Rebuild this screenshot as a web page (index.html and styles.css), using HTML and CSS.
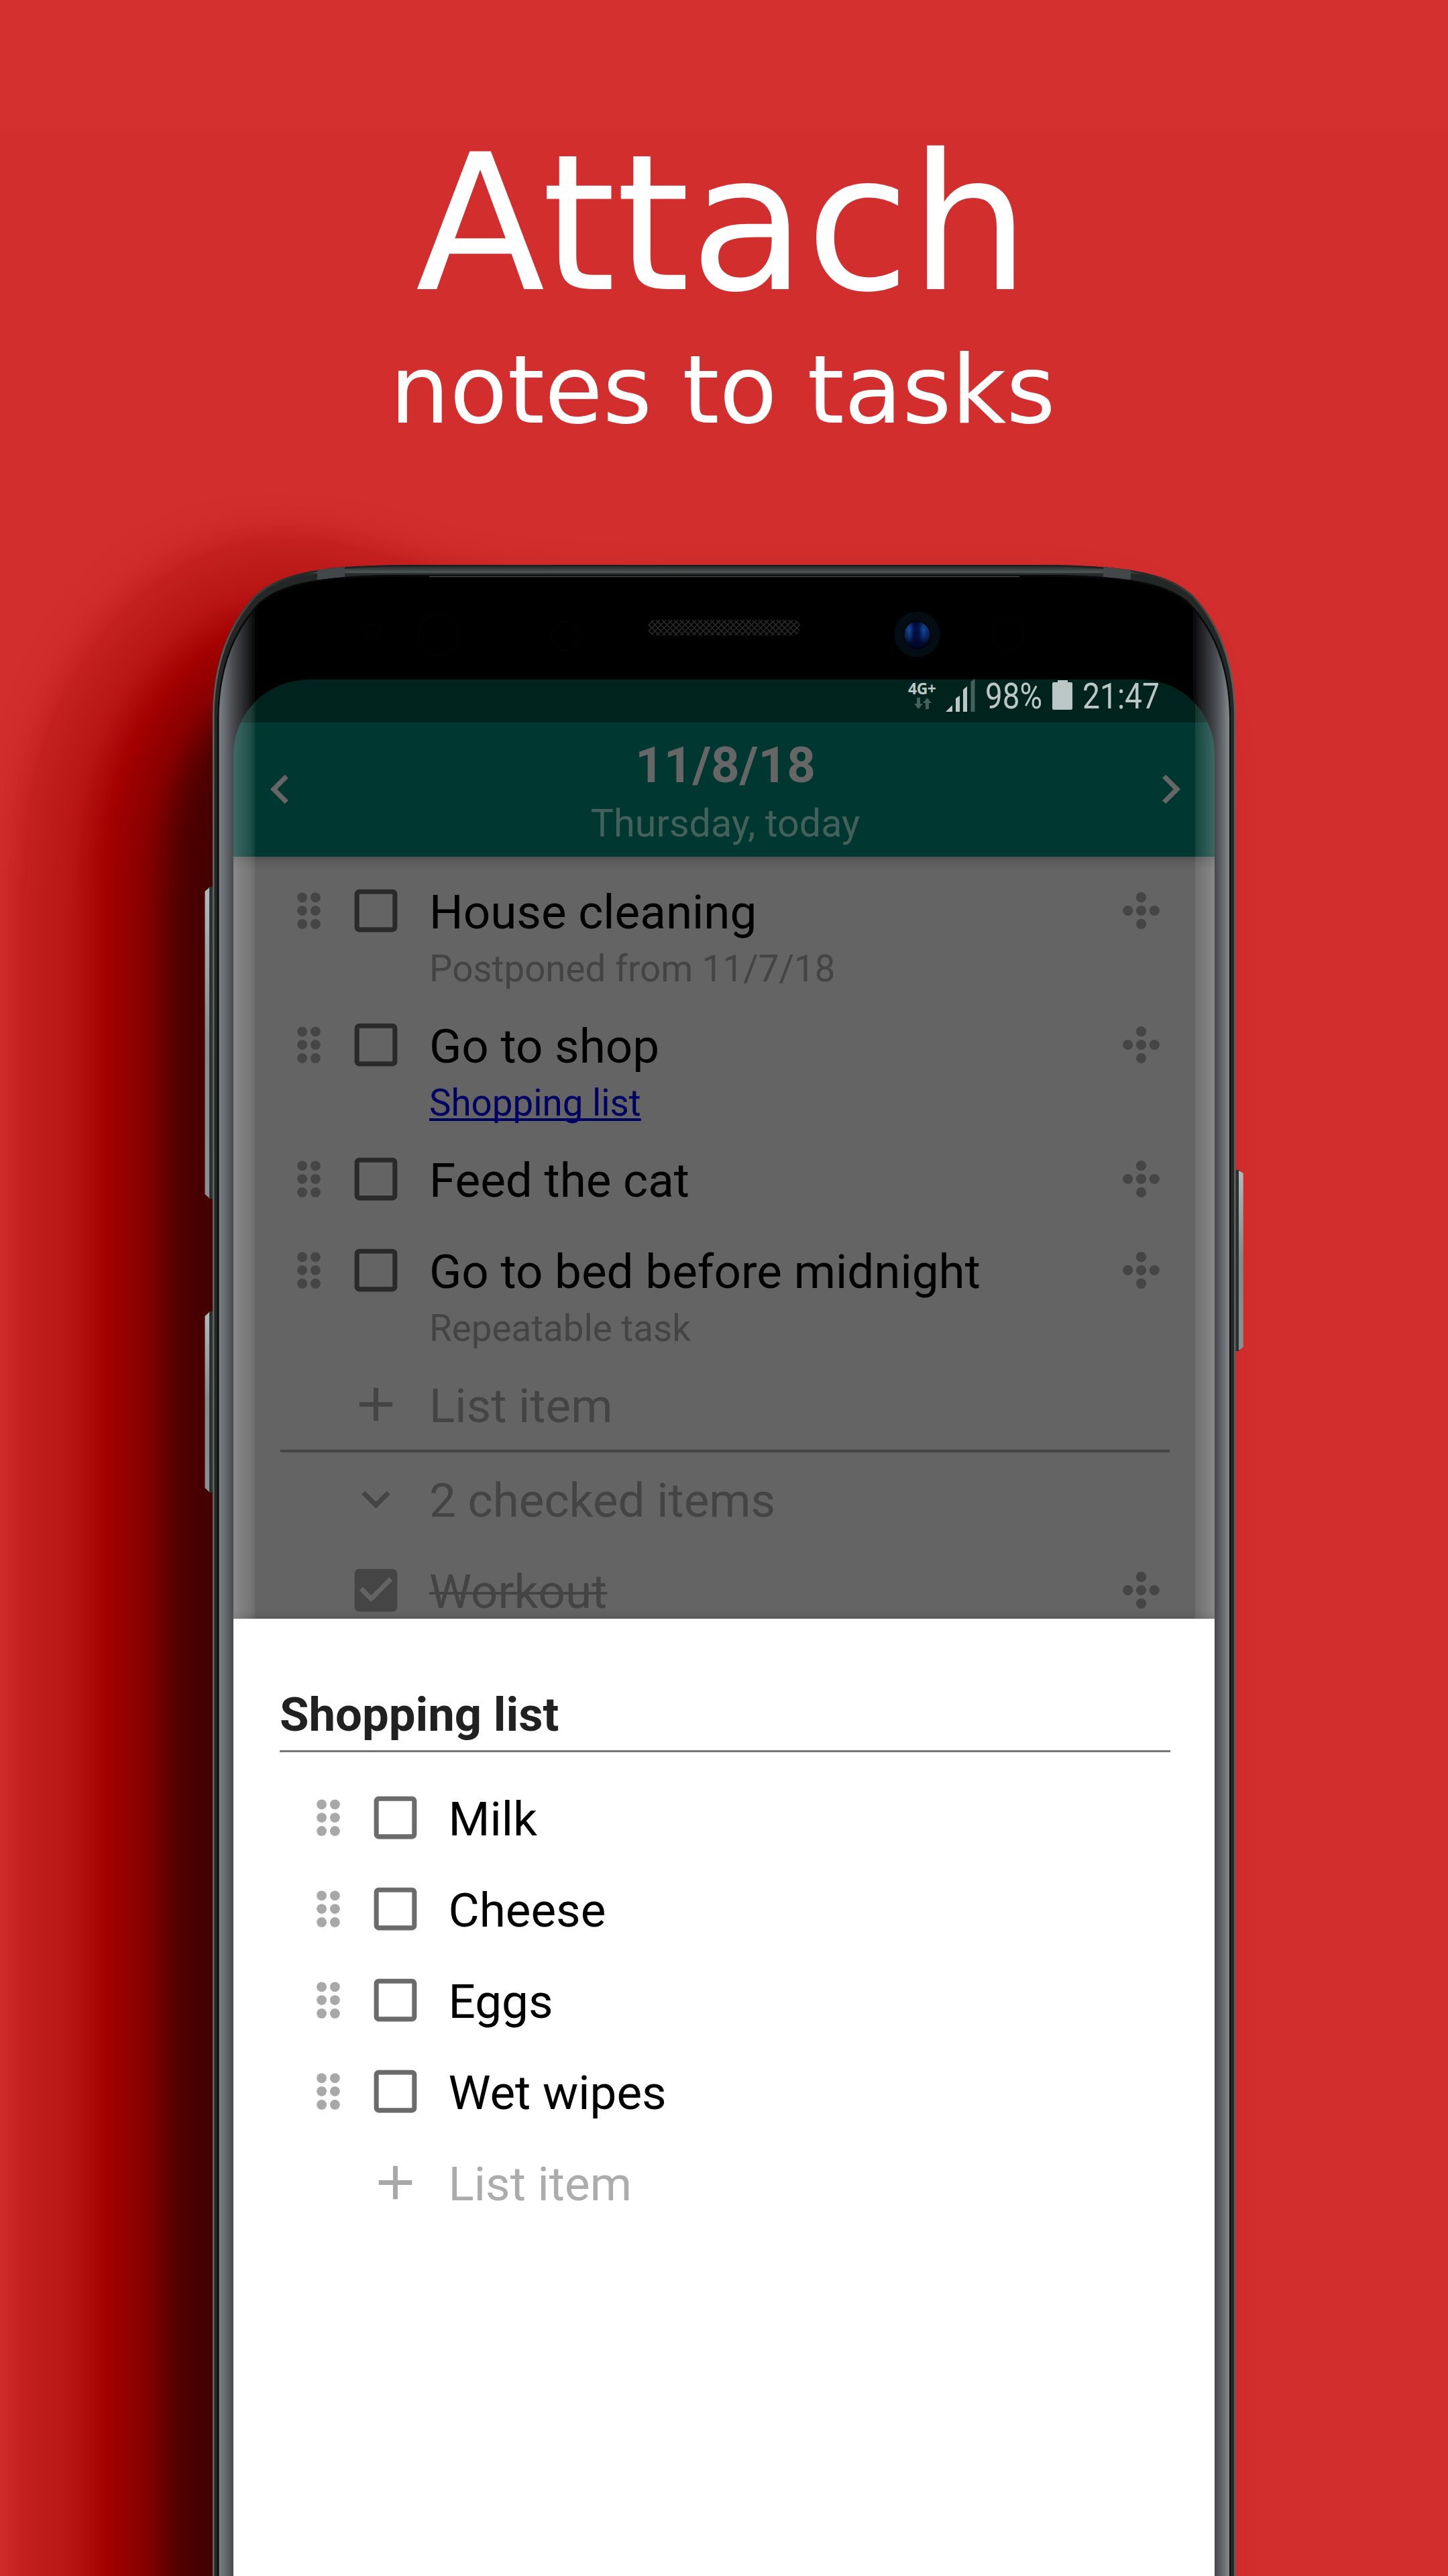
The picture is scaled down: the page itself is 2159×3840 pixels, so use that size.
FILE: index.html
```html
<!DOCTYPE html>
<html lang="en">
<head>
<meta charset="utf-8">
<title>Attach notes to tasks</title>
<link rel="stylesheet" href="styles.css">
</head>
<body>
<svg class="defs" aria-hidden="true">
  <symbol id="i-handle" viewBox="0 0 85 85"><circle cx="32.6" cy="22.8" r="7.4"/><circle cx="52.4" cy="22.8" r="7.4"/><circle cx="32.6" cy="42.6" r="7.4"/><circle cx="52.4" cy="42.6" r="7.4"/><circle cx="32.6" cy="62.4" r="7.4"/><circle cx="52.4" cy="62.4" r="7.4"/></symbol>
  <symbol id="i-move" viewBox="0 0 85 85"><circle cx="42.5" cy="22.7" r="7.6"/><circle cx="22.7" cy="42.5" r="7.6"/><circle cx="42.5" cy="42.5" r="7.6"/><circle cx="62.3" cy="42.5" r="7.6"/><circle cx="42.5" cy="62.3" r="7.6"/></symbol>
  <symbol id="i-box" viewBox="0 0 24 24"><path d="M19 5v14H5V5h14m0-2H5c-1.100 0-2 .9-2 2v14c0 1.100.9 2 2 2h14c1.100 0 2-.9 2-2V5c0-1.100-.9-2-2-2z"/></symbol>
  <symbol id="i-checked" viewBox="0 0 24 24"><path d="M19 3H5c-1.110 0-2 .9-2 2v14c0 1.100.89 2 2 2h14c1.110 0 2-.9 2-2V5c0-1.100-.89-2-2-2zm-9 14l-5-5 1.410-1.410L10 14.170l7.590-7.590L19 8l-9 9z"/></symbol>
  <symbol id="i-plus" viewBox="0 0 24 24"><path d="M19 13h-6v6h-2v-6H5v-2h6V5h2v6h6v2z"/></symbol>
  <symbol id="i-down" viewBox="0 0 24 24"><path d="M16.590 8.590L12 13.170 7.410 8.590 6 10l6 6 6-6z"/></symbol>
  <symbol id="i-left" viewBox="0 0 24 24"><path d="M15.410 7.410L14 6l-6 6 6 6 1.410-1.410L10.830 12z"/></symbol>
  <symbol id="i-right" viewBox="0 0 24 24"><path d="M10 6L8.590 7.410 13.170 12l-4.580 4.590L10 18l6-6z"/></symbol>
</svg>

<div class="poster">
  <svg class="device" viewBox="0 0 2159 3840" aria-hidden="true">
    <defs>
      <filter id="glow" filterUnits="userSpaceOnUse" x="-500" y="200" width="3200" height="4200" color-interpolation-filters="sRGB">
        <feGaussianBlur stdDeviation="80"/>
        <feComponentTransfer>
          <feFuncR type="table" tableValues=".827 .769 .749 .737 .729 .718 .698 .682 .667 .651 .639 .616 .596 .58 .557 .537 .49 .424 .353 .29 .259"/>
          <feFuncG type="table" tableValues=".184 .125 .114 .102 .09 .078 .063 .047 .031 .016 0 0 0 0 0 0 0 0 0 0 0"/>
          <feFuncB type="table" tableValues=".184 .125 .112 .1 .088 .076 .06 .045 .03 .014 0 0 0 0 0 0 0 0 0 0 0"/>
        </feComponentTransfer>
      </filter>
      <filter id="soft" x="-20%" y="-5%" width="140%" height="110%"><feGaussianBlur stdDeviation="4"/></filter>
      <linearGradient id="rim" gradientUnits="userSpaceOnUse" x1="0" y1="842" x2="0" y2="857">
        <stop offset="0" stop-color="#1b1f20"/><stop offset=".75" stop-color="#4f5755"/><stop offset=".85" stop-color="#2c3130"/><stop offset="1" stop-color="#232827"/>
      </linearGradient>
      <linearGradient id="rimEdge" gradientUnits="userSpaceOnUse" x1="0" y1="842" x2="0" y2="1100">
        <stop offset="0" stop-color="#1b1f20"/><stop offset=".12" stop-color="#343a3a"/><stop offset=".5" stop-color="#555d5b"/><stop offset="1" stop-color="#5e6664"/>
      </linearGradient>
      <linearGradient id="edgeL" gradientUnits="userSpaceOnUse" x1="324" y1="0" x2="382" y2="0">
        <stop offset="0" stop-color="#83878d"/><stop offset=".2" stop-color="#666a70"/><stop offset=".41" stop-color="#46494e"/><stop offset=".75" stop-color="#222426"/><stop offset="1" stop-color="#000"/>
      </linearGradient>
      <linearGradient id="edgeR" gradientUnits="userSpaceOnUse" x1="1835.500" y1="0" x2="1777.500" y2="0">
        <stop offset="0" stop-color="#8e9498"/><stop offset=".2" stop-color="#666a6f"/><stop offset=".41" stop-color="#43474a"/><stop offset=".75" stop-color="#222426"/><stop offset="1" stop-color="#000"/>
      </linearGradient>
      <linearGradient id="key" x1="0" y1="0" x2="0" y2="1"><stop offset="0" stop-color="#b4babb"/><stop offset=".5" stop-color="#838b8b"/><stop offset="1" stop-color="#899192"/></linearGradient>
      <linearGradient id="lens" x1="0" y1="0" x2="1" y2="0"><stop offset="0" stop-color="#06245c"/><stop offset=".2" stop-color="#14509b"/><stop offset=".38" stop-color="#031048"/><stop offset=".55" stop-color="#031048"/><stop offset=".75" stop-color="#0f4c96"/><stop offset="1" stop-color="#06245c"/></linearGradient>
      <linearGradient id="lensShade" x1="0" y1="0" x2="0" y2="1"><stop offset="0" stop-color="#01082a" stop-opacity=".5"/><stop offset=".3" stop-color="#01082a" stop-opacity="0"/><stop offset=".6" stop-color="#01082a" stop-opacity=".4"/><stop offset=".85" stop-color="#01082a"/></linearGradient>
      <pattern id="mesh" width="9" height="9" patternUnits="userSpaceOnUse"><path d="M0 0L9 9M9 0L0 9" stroke="#2b2b2b" stroke-width="1.500"/></pattern>
      <clipPath id="body"><path id="outline" d="M317 3860V1066C318 980 345 925 381 887C420 853 480 842 620 842H1539.500C1679.500 842 1739.500 853 1778.500 887C1814.500 925 1841.500 980 1842.500 1066V3860Z"/></clipPath>
      <clipPath id="glass"><path d="M324 3860V1070C325 990 350 935 388 897C425 866 490 857 620 857H1539.500C1669.500 857 1734.500 866 1771.500 897C1809.500 935 1834.500 990 1835.500 1070V3860Z"/></clipPath>
    </defs>
    <g filter="url(#glow)">
      <rect x="-900" y="-200" width="4200" height="5200" fill="#000"/>
      <path fill="#fff" d="M160 4800V1280C160 1120 240 1000 350 932C430 895 520 950 660 985L900 1002H1600C1660 1010 1683 1060 1683 1200V4800Z"/>
    </g>
    <!-- side keys -->
    <g>
      <path fill="#2b3230" d="M311 1322h7v465h-7zM311 1955h7v270h-7zM1842 1744h6v270h-6z"/>
      <path fill="url(#key)" d="M305.500 1329L312 1323V1786L305.500 1780Z"/>
      <path fill="url(#key)" d="M305.500 1962L312 1956V2224L305.500 2218Z"/>
      <path fill="url(#key)" d="M1847 1745L1853.700 1749V2008L1847 2013Z"/>
    </g>
    <g clip-path="url(#body)">
      <use href="#outline" fill="url(#rim)"/>
      <use href="#outline" fill="none" stroke="url(#rimEdge)" stroke-width="5"/>
      <path d="M473 840h41v24h-41zM1645 840h41v24h-41z" fill="#42474a"/>
    </g>
    <g clip-path="url(#glass)">
      <rect x="300" y="840" width="1560" height="3020" fill="#000"/>
      <path fill="url(#edgeL)" filter="url(#soft)" d="M300 840L450 866C405 915 384 975 380 1035V3900H300Z"/>
      <path fill="url(#edgeR)" filter="url(#soft)" d="M1859.500 840L1709.500 866C1754.500 915 1775.500 975 1779.500 1035V3900H1859.500Z"/>
      <path d="M324 3860V1070C325 990 350 935 388 897C425 866 490 857 620 857H1539.500C1669.500 857 1734.500 866 1771.500 897C1809.500 935 1834.500 990 1835.500 1070V3860" fill="none" stroke="#07090a" stroke-width="5"/>
      <path d="M640 859.500H1520" stroke="#414846" stroke-width="1.500"/>
    </g>
    <rect x="966" y="924" width="227" height="23" rx="11" fill="url(#mesh)"/>
    <g fill="none" stroke="#060606">
      <circle cx="556" cy="943" r="12"/>
      <circle cx="654" cy="946" r="31"/>
      <circle cx="843" cy="948" r="21"/>
      <circle cx="1503" cy="945" r="24"/>
    </g>
    <circle cx="1367.400" cy="945.700" r="34" fill="#050d14"/>
    <circle cx="1367.400" cy="946" r="21.500" fill="#01030a"/>
    <circle cx="1367.400" cy="946" r="19" fill="url(#lens)"/>
    <circle cx="1367.400" cy="946" r="19.300" fill="url(#lensShade)"/>
  </svg>

  <header class="headline">
    <h1>Attach</h1>
    <p>notes to tasks</p>
  </header>

  <main class="screen">
    <div class="status">
      <div class="net">
        <span class="gen">4G+</span>
        <svg width="26" height="18" viewBox="0 0 26 18"><path d="M4 0h5v9h4l-6.500 8L0 9h4zM17 17h5V8h4L19.500 0 13 8h4z"/></svg>
      </div>
      <svg class="signal" width="44" height="50" viewBox="0 0 44 50"><path d="M0 49L10 39V49ZM15 29L21 25V49H15ZM26 16L32 11V49H26Z"/><path class="weak" d="M37.500 4L43.500 0V49H37.500Z"/></svg>
      <svg class="text98" width="85" height="54"><text x="0" y="43" textLength="85" lengthAdjust="spacingAndGlyphs">98%</text></svg>
      <svg class="battery" width="30" height="44" viewBox="0 0 30 44"><path d="M8 0h15v3h5a2 2 0 0 1 2 2v37a2 2 0 0 1-2 2H2a2 2 0 0 1-2-2V5a2 2 0 0 1 2-2h6z"/></svg>
      <svg class="time" width="115" height="54"><text x="0" y="43" textLength="115" lengthAdjust="spacingAndGlyphs">21:47</text></svg>
    </div>
    <div class="toolbar">
      <svg class="nav"><use href="#i-left"/></svg>
      <div class="date"><strong>11/8/18</strong><span>Thursday, today</span></div>
      <svg class="nav"><use href="#i-right"/></svg>
    </div>
    <div class="tasks">
      <div class="row"><svg class="ic"><use href="#i-handle"/></svg><svg class="ic box"><use href="#i-box"/></svg><div class="txt"><div class="label">House cleaning</div><div class="sub">Postponed from 11/7/18</div></div><svg class="ic"><use href="#i-move"/></svg></div>
      <div class="row"><svg class="ic"><use href="#i-handle"/></svg><svg class="ic box"><use href="#i-box"/></svg><div class="txt"><div class="label">Go to shop</div><div class="sub"><a>Shopping list</a></div></div><svg class="ic"><use href="#i-move"/></svg></div>
      <div class="row"><svg class="ic"><use href="#i-handle"/></svg><svg class="ic box"><use href="#i-box"/></svg><div class="txt"><div class="label">Feed the cat</div></div><svg class="ic"><use href="#i-move"/></svg></div>
      <div class="row"><svg class="ic"><use href="#i-handle"/></svg><svg class="ic box"><use href="#i-box"/></svg><div class="txt"><div class="label">Go to bed before midnight</div><div class="sub">Repeatable task</div></div><svg class="ic"><use href="#i-move"/></svg></div>
      <div class="row muted"><i class="ic"></i><svg class="ic"><use href="#i-plus"/></svg><div class="txt"><div class="label">List item</div></div></div>
      <div class="rule"></div>
      <div class="row muted"><i class="ic"></i><svg class="ic"><use href="#i-down"/></svg><div class="txt"><div class="label">2 checked items</div></div></div>
      <div class="row muted"><i class="ic"></i><svg class="ic"><use href="#i-checked"/></svg><div class="txt"><div class="label"><s>Workout</s></div></div><svg class="ic"><use href="#i-move"/></svg></div>
    </div>
    <section class="sheet">
      <h2>Shopping list</h2>
      <div class="row"><svg class="ic"><use href="#i-handle"/></svg><svg class="ic box"><use href="#i-box"/></svg><div class="label">Milk</div></div>
      <div class="row"><svg class="ic"><use href="#i-handle"/></svg><svg class="ic box"><use href="#i-box"/></svg><div class="label">Cheese</div></div>
      <div class="row"><svg class="ic"><use href="#i-handle"/></svg><svg class="ic box"><use href="#i-box"/></svg><div class="label">Eggs</div></div>
      <div class="row"><svg class="ic"><use href="#i-handle"/></svg><svg class="ic box"><use href="#i-box"/></svg><div class="label">Wet wipes</div></div>
      <div class="row muted"><i class="ic"></i><svg class="ic"><use href="#i-plus"/></svg><div class="label">List item</div></div>
    </section>
  </main>
</div>
</body>
</html>
```
FILE: styles.css
```css
* { box-sizing: border-box; }
body { margin: 0; background: #d32f2f; }
h1, h2, p { margin: 0; font-weight: 400; }
.defs { position: absolute; width: 0; height: 0; }

.poster {
  position: relative;
  width: 2159px;
  height: 3840px;
  overflow: hidden;
  font-family: Roboto, "Liberation Sans", sans-serif;
}
.device { position: absolute; left: 0; top: 0; width: 2159px; height: 3840px; }

.headline {
  position: relative;
  height: 1013px;
  padding: 193px 4px 0 0;
  color: #fff;
  text-align: center;
  font-family: "DejaVu Sans", sans-serif;
}
.headline h1 { font-size: 282px; line-height: 282px; }
.headline p { margin-top: 24px; font-size: 141px; line-height: 164px; }

/* the status bar and toolbar colours are bands of the screen's own background */
.screen {
  position: relative;
  display: flex;
  flex-direction: column;
  width: 1463px;
  height: 2827px;
  margin-left: 348px;
  border-radius: 112px 110px 0 0;
  background: linear-gradient(#00241d 64px, #003730 64px, #003730 264px, #505050 264px, #5c5c5c 272px, #646464 284px);
}
/* light caught by the curved glass, above the open sheet */
.screen::before {
  content: "";
  position: absolute;
  z-index: 1;
  inset: 0 0 auto;
  height: 1400px;
  border-radius: 112px 110px 0 0;
  background:
    linear-gradient(to right, rgba(255,255,255,.25), rgba(255,255,255,.12) 75%, rgba(255,255,255,.06) 92%, transparent) left / 34px 100% no-repeat,
    linear-gradient(to left, rgba(255,255,255,.24), rgba(255,255,255,.08)) right / 29px 100% no-repeat;
}

.status {
  display: flex;
  align-items: flex-start;
  height: 64px;
  padding-left: 1006px;
  fill: #bcc6c4;
}
.status svg { overflow: visible; }
.status text { font-family: Roboto, sans-serif; font-size: 54px; }
.net { width: 44px; padding-top: 3px; }
.gen { display: block; height: 24px; font: 700 23px/20px "Open Sans", sans-serif; letter-spacing: -.5px; color: #bcc6c4; }
.net svg { display: block; margin-left: 9px; fill: #46605b; }
.signal { margin: -1px 0 0 12px; }
.signal .weak { fill: #46605b; }
.text98 { margin-left: 15px; }
.battery { margin: 1px 0 0 15px; }
.time { margin-left: 15px; }

.toolbar {
  display: flex;
  justify-content: space-between;
  height: 200px;
  padding: 56px 22px 0 26px;
  color: #666;
}
.nav { width: 87px; height: 87px; fill: #666; }
.date { display: flex; flex-direction: column; align-items: center; margin-top: -56px; }
.date strong { margin-top: 24px; font-size: 74.500px; line-height: 80px; font-weight: 700; }
.date span { margin-top: 12px; font-size: 57.500px; line-height: 70px; color: #43605b; }

.tasks {
  height: 1136px;
  padding: 12px 67px 0 70px;
  fill: #454545;
}
.row { display: flex; }
.ic { flex: none; width: 85px; height: 85px; margin-top: 25.500px; }
.ic + .ic { margin-left: 15px; }
.tasks .box { fill: #2a2a2a; }
.txt { flex: 1; margin-left: 37px; }
.label { height: 136px; font-size: 71px; line-height: 141px; white-space: nowrap; color: #000; }
.sub { height: 77px; margin-top: -13px; font-size: 54.700px; line-height: 65px; color: #444; }
.sub a { color: #000062; text-decoration: underline; text-decoration-thickness: 4px; text-underline-offset: 4px; text-decoration-skip-ink: none; }
.muted .label { color: #444; }
.muted s { text-decoration-thickness: 4px; }
.rule { height: 4px; margin: 0 0 1px; background: #454545; }

.sheet {
  position: relative;
  z-index: 2;
  flex: 1;
  padding: 130px 66px 0 69px;
  background: #fff;
  box-shadow: 0 -4px 12px rgba(0,0,0,.12);
  clip-path: inset(-20px 0 0 0);
  fill: #a8a8a8;
}
.sheet h2 {
  height: 69px;
  margin-bottom: 29px;
  border-bottom: 3px solid #757575;
  font-size: 70.700px;
  line-height: 26px;
  font-weight: 700;
  color: #212121;
}
.sheet .row { margin-left: 30px; }
.sheet .box { fill: #6b6b6b; }
.sheet .label { margin-left: 36.500px; }
.sheet .muted .label { color: #acacac; }
```
